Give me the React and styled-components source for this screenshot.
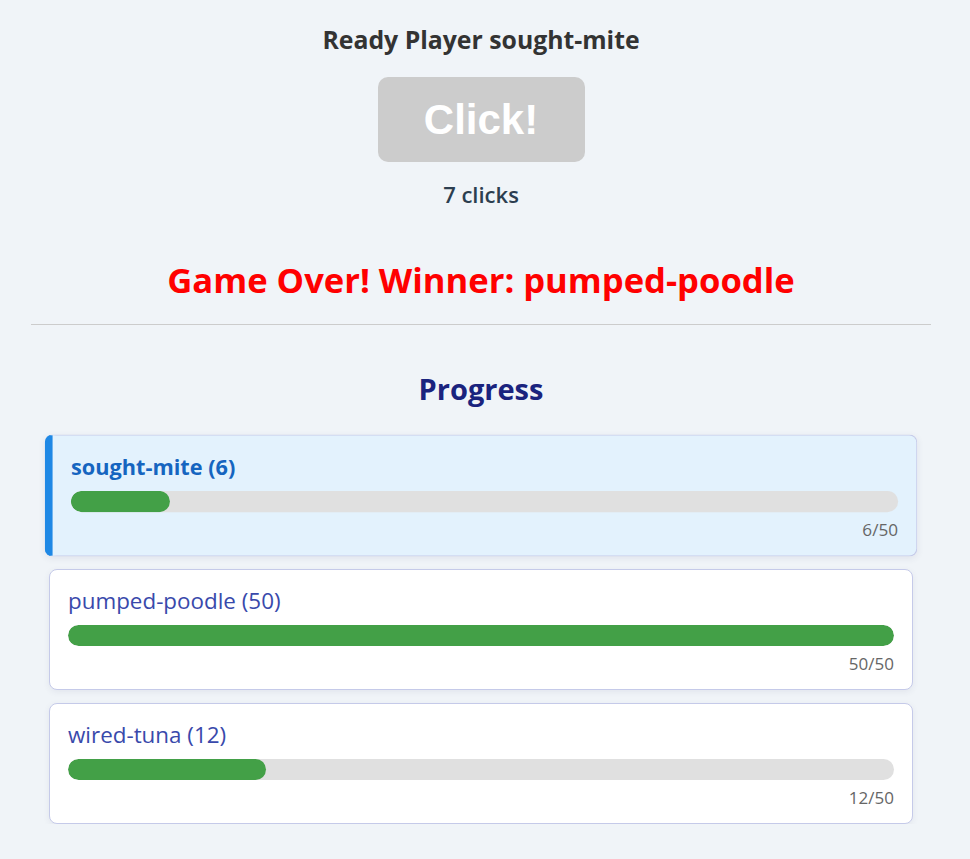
import React from "react";
import styled, { createGlobalStyle } from "styled-components";

const Global = createGlobalStyle`
  html, body { margin: 0; padding: 0; background: #f0f4f8; }
  body { font-family: "Open Sans", "Noto Sans", sans-serif; }
`;

const Page = styled.div`
  width: 900px;
  margin-left: 31px;
  padding-top: 23px;
  display: flex;
  flex-direction: column;
  align-items: center;
`;

const Title = styled.h2`
  margin: 0;
  font-size: 24.8px;
  line-height: 32px;
  font-weight: 700;
  color: #333;
`;

const ClickButton = styled.button`
  margin-top: 22px;
  width: 207px;
  height: 85px;
  border: none;
  border-radius: 10px;
  background: #cccccc;
  color: #fff;
  font-family: "Liberation Sans", Arial, sans-serif;
  font-weight: 700;
  font-size: 42px;
  cursor: not-allowed;
`;

const Clicks = styled.div`
  margin-top: 18px;
  font-size: 22px;
  line-height: 28px;
  font-weight: 600;
  color: #2c3e50;
`;

const Winner = styled.h1`
  margin: 50px 0 0;
  font-size: 34.6px;
  line-height: 44px;
  font-weight: 700;
  color: #ff0000;
`;

const Divider = styled.hr`
  align-self: stretch;
  margin: 22px 0 0;
  border: none;
  border-top: 1px solid #cccccc;
`;

const Section = styled.section`
  align-self: stretch;
  padding: 0 18px;
  display: flex;
  flex-direction: column;
  align-items: stretch;
  gap: 13px;
`;

const SectionTitle = styled.h2`
  margin: 45px 0 14px;
  text-align: center;
  font-size: 29px;
  line-height: 38px;
  font-weight: 700;
  color: #1a237e;
`;

const Card = styled.div`
  background: ${(p) => (p.$active ? "#e3f2fd" : "#ffffff")};
  border: 1px solid #c5cae9;
  border-left: ${(p) => (p.$active ? "8px solid #1e88e5" : "1px solid #c5cae9")};
  border-radius: 8px;
  padding: 18px 18px 12px;
  box-shadow: 0 2px 6px rgba(60, 70, 120, 0.08);
  transform: ${(p) => (p.$active ? "scale(1.01)" : "none")};
  height: 121px;
  box-sizing: border-box;
`;

const Name = styled.div`
  font-size: ${(p) => (p.$active ? "21.5px" : "22.4px")};
  line-height: 26px;
  font-weight: ${(p) => (p.$active ? 700 : 400)};
  color: ${(p) => (p.$active ? "#1565c0" : "#3949ab")};
  white-space: nowrap;
`;

const Track = styled.div`
  margin-top: 11px;
  height: 21px;
  border-radius: 11px;
  background: #e0e0e0;
  overflow: hidden;
`;

const Fill = styled.div`
  height: 100%;
  border-radius: 11px;
  background: #43a047;
`;

const Count = styled.div`
  margin-top: 7px;
  text-align: right;
  font-size: 17px;
  line-height: 22px;
  color: #666;
`;

const players = [
  { name: "sought-mite", score: 6, active: true },
  { name: "pumped-poodle", score: 50 },
  { name: "wired-tuna", score: 12 },
];

export default function App() {
  return (
    <>
      <Global />
      <Page>
        <Title>Ready Player sought-mite</Title>
        <ClickButton disabled>Click!</ClickButton>
        <Clicks>7 clicks</Clicks>
        <Winner>Game Over! Winner: pumped-poodle</Winner>
        <Divider />
        <Section>
          <SectionTitle>Progress</SectionTitle>
          {players.map((p) => (
            <Card key={p.name} $active={p.active}>
              <Name $active={p.active}>
                {p.name} ({p.score})
              </Name>
              <Track>
                <Fill style={{ width: `${(p.score / 50) * 100}%` }} />
              </Track>
              <Count>{p.score}/50</Count>
            </Card>
          ))}
        </Section>
      </Page>
    </>
  );
}
